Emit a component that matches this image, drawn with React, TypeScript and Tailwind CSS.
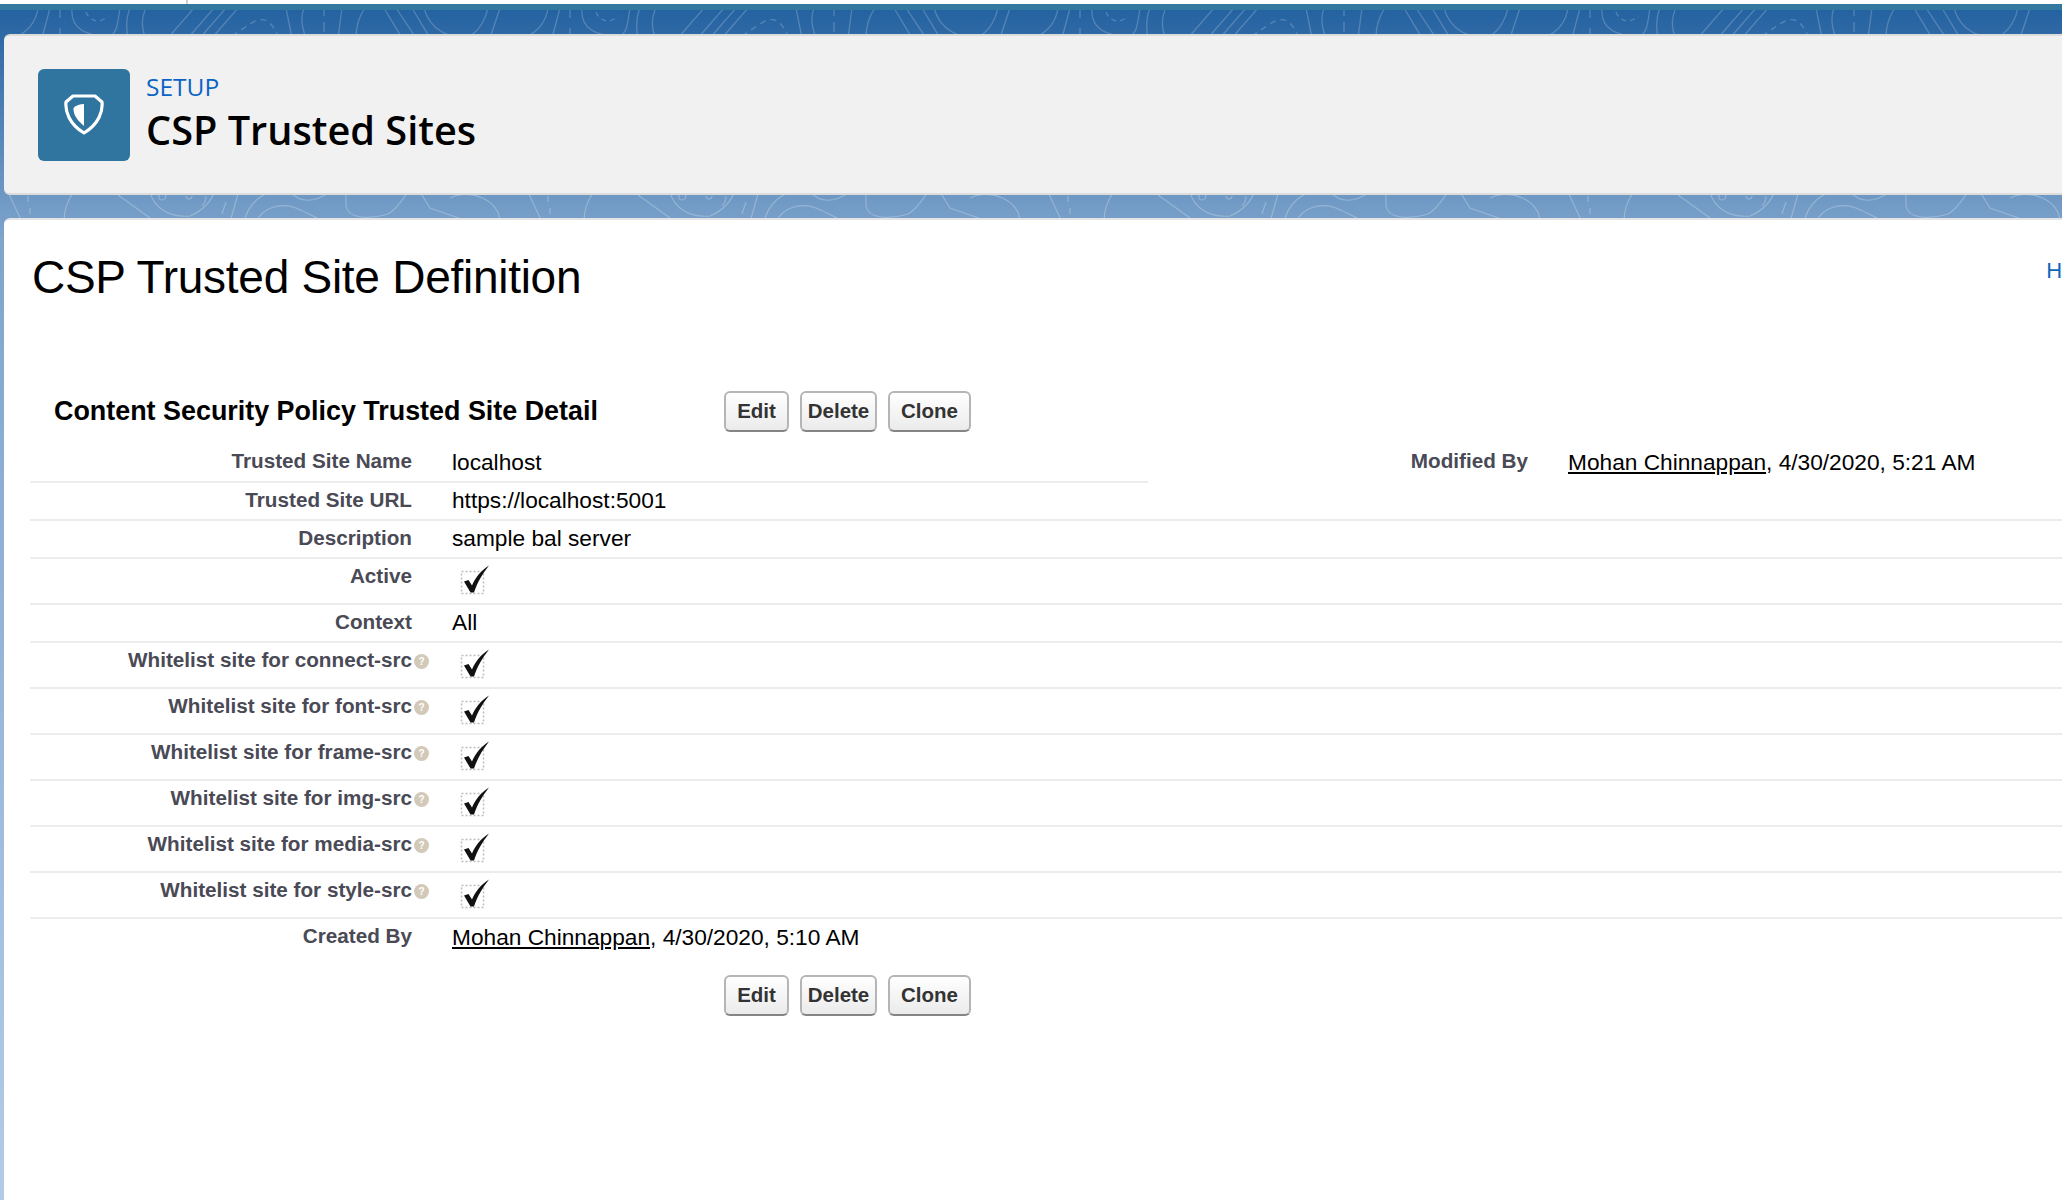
const sans = 'font-["Liberation_Sans",Arial,sans-serif]'

const rows = [
  { label: 'Trusted Site URL', value: 'https://localhost:5001' },
  { label: 'Description', value: 'sample bal server' },
  { label: 'Active', check: true },
  { label: 'Context', value: 'All' },
  { label: 'Whitelist site for connect-src', check: true, help: true },
  { label: 'Whitelist site for font-src', check: true, help: true },
  { label: 'Whitelist site for frame-src', check: true, help: true },
  { label: 'Whitelist site for img-src', check: true, help: true },
  { label: 'Whitelist site for media-src', check: true, help: true },
  { label: 'Whitelist site for style-src', check: true, help: true },
]

function Topo() {
  // contour lines of the page background, only visible in the gaps between the cards
  return (
    <svg className="absolute inset-0 h-full w-full" xmlns="http://www.w3.org/2000/svg">
      <defs>
        <pattern id="topo-top" width="510" height="30" patternUnits="userSpaceOnUse" y="8">
          <g fill="none" stroke="#ffffff" strokeOpacity="0.2" strokeWidth="1.3">
            <path d="M38 0C36 14 28 24 14 30" />
            <path d="M50 0L42 30M60 0V10M60 20V30" />
            <path d="M72 0C70 22 88 28 108 28C118 28 118 10 120 0" />
            <path d="M86 4C90 14 100 16 108 8" strokeDasharray="5 4" />
            <path d="M130 0C126 10 126 20 128 30M145 2C141 12 142 20 145 30" />
            <path d="M194 0L168 30M214 0L188 30M226 0L200 30M238 0L212 30" />
            <path d="M232 28L250 16C262 8 270 10 278 28" strokeDasharray="6 5" />
            <path d="M286 0L292 30M304 0C300 10 302 20 306 30M324 0V8M324 14V24M342 0L338 30M365 0C358 10 356 20 356 30" />
            <path d="M384 0L402 30M396 0L416 30M412 0L430 30M424 0C430 22 450 32 470 28C480 22 486 10 488 0M500 0L490 30" />
          </g>
        </pattern>
        <pattern id="topo-bottom" width="520" height="30" patternUnits="userSpaceOnUse" y="192">
          <g fill="none" stroke="#ffffff" strokeOpacity="0.25" strokeWidth="1.2">
            <path d="M8 0L22 30M28 4V10M30 16V22" />
            <path d="M74 0C66 10 64 20 64 30" />
            <path d="M114 0L150 26M150 0C154 16 170 26 190 24C204 18 212 8 214 0" />
            <path d="M160 2C166 -2 168 8 162 8C158 8 158 4 160 2M186 4C186 8 192 8 192 4" />
            <path d="M226 10L222 22M238 2L230 30M206 4C206 8 204 12 202 14" />
            <path d="M244 30C248 12 262 0 276 0M256 30C262 16 280 10 296 16C310 22 320 28 326 30" />
            <path d="M290 0C300 10 312 12 330 0M346 0V14C348 26 366 28 388 22C396 18 402 8 408 0" />
            <path d="M420 0L430 16L470 30M450 6C470 -4 500 8 500 30" />
          </g>
        </pattern>
      </defs>
      <rect x="0" y="8" width="100%" height="30" fill="url(#topo-top)" />
      <rect x="0" y="192" width="100%" height="30" fill="url(#topo-bottom)" />
    </svg>
  )
}

function ShieldIcon() {
  return (
    <svg width="40" height="42" viewBox="0 0 40 42" fill="none">
      <path
        d="M9 2H31L38 8C39 17 35 30 20 39C5 30 1 17 2 8Z"
        stroke="#ffffff"
        strokeWidth="3.2"
        strokeLinejoin="round"
      />
      <path d="M20 10V32C14 27 9 21 9.500 14C12 11.500 16 10 20 10Z" fill="#ffffff" />
    </svg>
  )
}

function CheckMark() {
  return (
    <svg width="30" height="30" viewBox="0 0 30 30" fill="none">
      <rect x="1.500" y="6.500" width="22" height="22" stroke="#bdbdbd" strokeWidth="1.500" strokeDasharray="2 2" />
      <path d="M4 16.500L8.500 15L12 20.500C15 13 21 5.500 29 0.500C22.500 9 17.500 17 14 27.500H10.500Z" fill="#111111" />
    </svg>
  )
}

function HelpIcon() {
  return (
    <span className={`absolute left-[2px] top-[11px] flex h-[15px] w-[15px] items-center justify-center rounded-full bg-[#d2c9b8] text-[10px] font-bold leading-none text-white ${sans}`}>
      ?
    </span>
  )
}

function Buttons() {
  const btn =
    'h-[41px] rounded-[6px] border-2 border-[#b5b5b5] border-b-[#858585] bg-gradient-to-b from-white to-[#ebebeb] text-[20.5px] font-bold text-[#333333]'
  return (
    <div className="flex gap-[11px]">
      <button className={`${btn} w-[65px]`}>Edit</button>
      <button className={`${btn} w-[77px]`}>Delete</button>
      <button className={`${btn} w-[83px]`}>Clone</button>
    </div>
  )
}

function Label({ children }: { children: React.ReactNode }) {
  return (
    <div className="w-[382px] shrink-0 pt-[2px] text-right text-[20.7px] font-bold leading-[30px] text-[#4a4a56]">
      {children}
    </div>
  )
}

export default function App() {
  return (
    <div className={`relative flex h-[1200px] w-full flex-col overflow-hidden bg-gradient-to-b from-[#1f5f9f] via-[#7fa5cc] via-20% to-[#b4cbe8] ${sans}`}>
      <Topo />
      <div className="relative h-[4px] bg-white">
        <div className="h-full w-[188px] border-r-2 border-[#d0d0d0]" />
      </div>
      <div className="relative h-[6px] bg-[#32789f]" />

      <div className="relative ml-[4px] mt-[24px] flex h-[161px] items-center rounded-l-[6px] border-t-2 border-b-2 border-[#dcdcdc] bg-[#f1f1f1] pl-[34px]">
        <div className="flex h-[92px] w-[92px] items-center justify-center rounded-[6px] bg-[#2f75a0]">
          <ShieldIcon />
        </div>
        <div className="ml-[16px] -mt-[3px] font-['Open_Sans',sans-serif]">
          <div className="text-[24.5px] leading-[30px] text-[#0b63c5]">SETUP</div>
          <div className="mt-[3px] text-[39.7px] font-semibold leading-[50px] text-black">CSP Trusted Sites</div>
        </div>
      </div>

      <div className="relative ml-[4px] mt-[23px] flex-1 rounded-tl-[6px] border-t-2 border-[#e4e4e4] bg-white pt-[27px]">
        <div className="flex items-start justify-between pl-[28px]">
          <h1 className="text-[46px] font-normal leading-[60px] tracking-[-0.27px] text-black">CSP Trusted Site Definition</h1>
          <a className="-mr-[159px] mt-[7px] shrink-0 text-[22px] text-[#0f66b8]">Help for this Page</a>
        </div>

        <div className="mt-[84px] flex items-center pl-[50px]">
          <h2 className="w-[670px] text-[26.9px] font-bold text-black">Content Security Policy Trusted Site Detail</h2>
          <Buttons />
        </div>

        <div className="ml-[26px] mt-[9px] text-[22.7px] text-black">
          <div className="flex h-[42px]">
            <div className="flex w-[1118px] shrink-0 border-b-2 border-[#ececec]">
              <div className="pt-[3px]">
                <Label>Trusted Site Name</Label>
              </div>
              <div className="pl-[40px] pt-[6px] leading-[30px]">localhost</div>
            </div>
            <div className="w-[380px] shrink-0 pt-[5px] text-right text-[20.7px] font-bold leading-[30px] text-[#4a4a56]">Modified By</div>
            <div className="shrink-0 pl-[40px] pt-[6px] leading-[30px]">
              <a className="underline">Mohan Chinnappan</a>, 4/30/2020, 5:21 AM
            </div>
          </div>

          {rows.map((r) => (
            <div key={r.label} className={`flex border-b-2 border-[#ececec] ${r.check ? 'h-[46px]' : 'h-[38px]'}`}>
              <Label>{r.label}</Label>
              {r.check ? (
                <div className="relative pl-[40px]">
                  {r.help && <HelpIcon />}
                  <div className="pl-[8px] pt-[6px]">
                    <CheckMark />
                  </div>
                </div>
              ) : (
                <div className="pl-[40px] pt-[1px] leading-[32px]">{r.value}</div>
              )}
            </div>
          ))}

          <div className="flex h-[38px]">
            <Label>Created By</Label>
            <div className="pl-[40px] pt-[3px] leading-[30px]">
              <a className="underline">Mohan Chinnappan</a>, 4/30/2020, 5:10 AM
            </div>
          </div>
        </div>

        <div className="mt-[18px] pl-[720px]">
          <Buttons />
        </div>
      </div>
    </div>
  )
}
